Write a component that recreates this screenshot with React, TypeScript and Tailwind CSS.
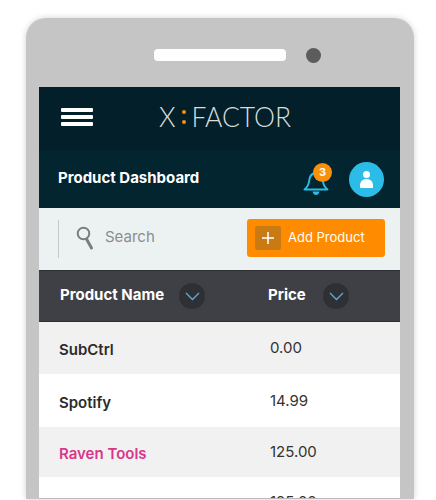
import React from "react";

function Chevron() {
  return (
    <span className="flex h-[26px] w-[26px] items-center justify-center rounded-full bg-[#2f3034]">
      <svg width="15" height="9" viewBox="0 0 15 9" fill="none" className="mt-[1px]">
        <path d="M1 1l6.500 6.500L14 1" stroke="#5ba9d6" strokeWidth="1.4" />
      </svg>
    </span>
  );
}

function Row({ name, price, shaded, pink, h }: { name: string; price: string; shaded?: boolean; pink?: boolean; h: string }) {
  return (
    <div className={`flex items-center ${h} ${shaded ? "bg-[#f1f1f1]" : "bg-white"}`}>
      <span className={`mt-[5px] w-[231px] pl-[20px] text-[15px] font-semibold ${pink ? "text-[#d9368a]" : "text-[#2b2b2b]"}`}>{name}</span>
      <span className="mt-[1px] text-[15px] text-[#333]">{price}</span>
    </div>
  );
}

export default function App() {
  return (
    <div className="h-[500px] w-[436px] overflow-hidden bg-white pl-[26px] pt-[18px] font-['Inter',sans-serif]">
      <div className="h-[481px] w-[388px] rounded-t-[20px] bg-[#c5c5c6] px-[13px] pt-[30px] shadow-[0_0_6px_rgba(0,0,0,0.18)]">
        <div className="flex h-[39px] items-start">
          <div className="ml-[115px] mt-[1px] h-[12px] w-[132px] rounded-[4px] bg-white" />
          <div className="ml-[20px] h-[15px] w-[15px] rounded-full bg-[#5c5c5c]" />
        </div>
        <div className="h-[412px] w-[361px] overflow-hidden border-b border-[#bbb]">
          <div className="flex h-[63px] items-center bg-[#03202a] pb-[3px]">
            <div className="ml-[22px] flex w-[32px] flex-col gap-[3px]">
              <div className="h-[4px] rounded-[1px] bg-white" />
              <div className="h-[4px] rounded-[1px] bg-white" />
              <div className="h-[4px] rounded-[1px] bg-white" />
            </div>
            <div className="ml-[66px] flex items-center font-['Lato',sans-serif] text-[26.500px] font-light leading-none text-[#d8dcdc]">
              <span>X</span>
              <span className="mx-[6px] flex flex-col gap-[6px]">
                <span className="h-[4px] w-[4px] rounded-full bg-[#f79000]" />
                <span className="h-[4px] w-[4px] rounded-full bg-[#f79000]" />
              </span>
              <span>FACTOR</span>
            </div>
          </div>
          <div className="flex h-[58px] items-center bg-[#03252f]">
            <span className="-mt-[2px] ml-[19px] w-[246px] text-[15px] font-bold text-white">Product Dashboard</span>
            <div className="relative mt-[3px] h-[30px] w-[28px]">
              <svg width="26" height="27" viewBox="0 0 26 27" fill="none" className="absolute -left-[1px] top-[3px]">
                <path d="M1.500 20.500c2.500-2 4-3.500 4.500-8 .5-5 3-8.500 7-8.500s6.500 3.500 7 8.500c.5 4.500 2 6 4.500 8z" stroke="#2bbbe6" strokeWidth="2" strokeLinejoin="round" />
                <path d="M9.500 22.500c.5 2.500 2 3.500 3.500 3.500s3-1 3.500-3.500z" fill="#2bbbe6" />
              </svg>
              <span className="absolute -top-[3px] left-[9px] flex h-[19px] w-[19px] items-center justify-center rounded-full bg-[#f7900a] text-[11px] font-bold text-white">3</span>
            </div>
            <div className="ml-[17px] flex h-[35px] w-[35px] flex-col items-center justify-center rounded-full bg-[#2cbce8]">
              <span className="h-[7px] w-[7px] rounded-full bg-white" />
              <span className="mt-[1px] h-[9px] w-[13px] rounded-t-[6px] bg-white" />
            </div>
          </div>
          <div className="flex h-[62px] items-center bg-[#ecf1f1]">
            <div className="ml-[19px] h-[38px] w-px bg-[#c4c9c9]" />
            <svg width="18" height="25" viewBox="0 0 18 25" fill="none" className="-mt-[2px] ml-[17px]">
              <circle cx="7.500" cy="7.500" r="5.800" stroke="#7d7d7d" strokeWidth="2" />
              <path d="M10.500 13l5 9" stroke="#7d7d7d" strokeWidth="3" strokeLinecap="round" />
            </svg>
            <span className="-mt-[4px] ml-[11px] w-[142px] text-[15px] text-[#8a8d8e]">Search</span>
            <div className="-mt-[2px] flex h-[38px] w-[138px] items-center rounded-[3px] bg-[#ff8c00]">
              <span className="ml-[8px] flex h-[24px] w-[26px] items-center justify-center rounded-[2px] bg-[#c97a12]">
                <svg width="12" height="12" viewBox="0 0 12 12"><path d="M6 0v12M0 6h12" stroke="#fff" strokeWidth="1.6" /></svg>
              </span>
              <span className="ml-[7px] text-[13px] text-white">Add Product</span>
            </div>
          </div>
          <div className="flex h-[52px] items-center border-y border-y-[#2f3035] bg-[#3f4046]">
            <span className="-mt-[2px] ml-[21px] w-[119px] text-[15px] font-bold text-white">Product Name</span>
            <Chevron />
            <span className="-mt-[2px] ml-[63px] w-[55px] text-[15px] font-bold text-white">Price</span>
            <Chevron />
          </div>
          <Row name="SubCtrl" price="0.00" shaded h="h-[52px]" />
          <Row name="Spotify" price="14.99" h="h-[53px]" />
          <Row name="Raven Tools" price="125.00" shaded pink h="h-[50px]" />
          <div className="h-[22px] bg-white pl-[231px] pt-[14px] text-[15px] leading-[22px] text-[#333]">125.00</div>
        </div>
      </div>
    </div>
  );
}
